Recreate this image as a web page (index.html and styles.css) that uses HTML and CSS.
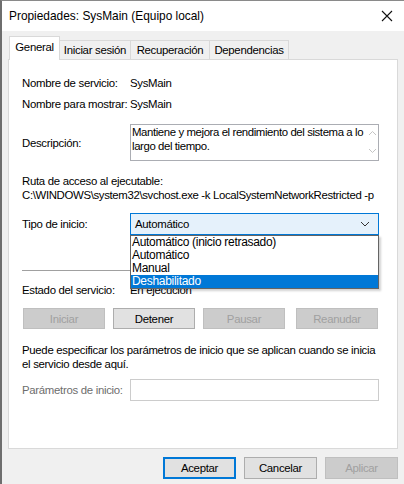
FILE: index.html
```html
<!DOCTYPE html>
<html lang="es">
<head>
<meta charset="utf-8">
<title>Propiedades: SysMain (Equipo local)</title>
<link rel="stylesheet" href="styles.css">
</head>
<body>
<div class="window">
  <div class="titlebar">
    <span class="title">Propiedades: SysMain (Equipo local)</span>
    <svg class="close" width="12" height="12" viewBox="0 0 12 12"><path d="M1 1L11 11M11 1L1 11" stroke="#111" stroke-width="1.1" fill="none"/></svg>
  </div>
  <div class="body">
    <div class="tabs">
      <div class="tab active">General</div>
      <div class="tab t2">Iniciar sesión</div>
      <div class="tab t3">Recuperación</div>
      <div class="tab t4">Dependencias</div>
    </div>
    <div class="panel">
      <div class="row r1"><span class="label">Nombre de servicio:</span><span>SysMain</span></div>
      <div class="row r2"><span class="label">Nombre para mostrar:</span><span>SysMain</span></div>
      <div class="row r3">
        <span class="label">Descripción:</span>
        <div class="textarea">
          <div class="ta-text">Mantiene y mejora el rendimiento del sistema a lo largo del tiempo.</div>
          <div class="ta-scroll">
            <svg width="9" height="6" viewBox="0 0 9 6"><path d="M1 5L4.5 1.5L8 5" stroke="#c4c4c4" fill="none"/></svg>
            <svg width="9" height="6" viewBox="0 0 9 6"><path d="M1 1L4.5 4.5L8 1" stroke="#c4c4c4" fill="none"/></svg>
          </div>
        </div>
      </div>
      <div class="path-label">Ruta de acceso al ejecutable:</div>
      <div class="path">C:\WINDOWS\system32\svchost.exe -k LocalSystemNetworkRestricted -p</div>
      <div class="row r4">
        <span class="label">Tipo de inicio:</span>
        <div class="combo">
          <span>Automático</span>
          <svg class="chev" width="10" height="6" viewBox="0 0 10 6"><path d="M1 1L5 5L9 1" stroke="#333" fill="none"/></svg>
          <div class="dropdown">
            <div class="opt">Automático (inicio retrasado)</div>
            <div class="opt">Automático</div>
            <div class="opt">Manual</div>
            <div class="opt sel">Deshabilitado</div>
          </div>
        </div>
      </div>
      <div class="sep"></div>
      <div class="row r5"><span class="label">Estado del servicio:</span><span>En ejecución</span></div>
      <div class="svc-buttons">
        <div class="btn disabled">Iniciar</div>
        <div class="btn">Detener</div>
        <div class="btn disabled">Pausar</div>
        <div class="btn disabled wide-gap">Reanudar</div>
      </div>
      <p class="note">Puede especificar los parámetros de inicio que se aplican cuando se inicia el servicio desde aquí.</p>
      <div class="row r6">
        <span class="label muted">Parámetros de inicio:</span>
        <div class="input"></div>
      </div>
    </div>
    <div class="footer">
      <div class="btn default">Aceptar</div>
      <div class="btn">Cancelar</div>
      <div class="btn disabled">Aplicar</div>
    </div>
  </div>
</div>
</body>
</html>
```
FILE: styles.css
```css
* { box-sizing: border-box; }
html, body { margin: 0; padding: 0; }
body {
  width: 404px;
  height: 484px;
  overflow: hidden;
  font-family: "Liberation Sans", Arial, sans-serif;
  font-size: 11.4px;
  letter-spacing: -0.3px;
  color: #000;
  background: #f0f0f0;
}
.window {
  height: 484px;
  border-left: 2px solid #6e6e6e;
  border-top: 1px solid #8a8a8a;
  background: #f0f0f0;
}
.titlebar {
  height: 30px;
  background: #fff;
  display: flex;
  align-items: center;
  justify-content: space-between;
  padding: 0 11px 0 7px;
}
.title { font-size: 11.9px; letter-spacing: 0; }
.body {
  padding: 0 0 0 6px;
}
.tabs {
  display: flex;
  align-items: flex-end;
  height: 28px;
  padding-left: 1px;
  white-space: nowrap;
}
.tab {
  height: 19px;
  border: 1px solid #d9d9d9;
  border-bottom: none;
  margin-left: -1px;
  display: flex;
  align-items: center;
  justify-content: center;
  background: #f0f0f0;
}
.tab.active {
  width: 51px;
  background: #fff;
  position: relative;
  z-index: 1;
  margin-bottom: -1px;
  height: 24px;
  margin-left: 0;
  padding-bottom: 3px;
}
.t2 { width: 72px; }
.t3 { width: 80px; }
.t4 { width: 80px; }
.panel {
  width: 390px;
  height: 390px;
  background: #fff;
  border: 1px solid #d9d9d9;
  padding: 16px 0 0 13px;
  display: flex;
  flex-direction: column;
}
.row {
  display: flex;
  align-items: center;
}
.label { width: 108px; flex: none; white-space: nowrap; }
.r1, .r2, .r5 { height: 14px; }
.r2 { margin-top: 7px; }
.r3 { margin-top: 13px; height: 37px; }
.textarea {
  width: 249px;
  height: 37px;
  border: 1px solid #abadb3;
  display: flex;
  justify-content: space-between;
}
.ta-text {
  width: 238px;
  padding: 0 0 0 1px;
  line-height: 14px;
  letter-spacing: -0.4px;
}
.ta-scroll {
  width: 11px;
  display: flex;
  flex-direction: column;
  justify-content: space-between;
  align-items: center;
  padding: 5px 0 6px;
}
.path-label { margin-top: 13px; height: 14px; line-height: 14px; }
.path { height: 15px; line-height: 15px; white-space: nowrap; letter-spacing: -0.35px; }
.r4 { margin-top: 10px; height: 22px; }
.combo {
  position: relative;
  width: 249px;
  height: 22px;
  border: 1px solid #0078d7;
  background: #e5f1fb;
  display: flex;
  align-items: center;
  justify-content: space-between;
  padding: 0 8px 0 4px;
}
.dropdown {
  position: absolute;
  left: -1px;
  top: 21px;
  width: 249px;
  background: #fff;
  border: 1px solid #646464;
  box-shadow: 2px 2px 2px rgba(0,0,0,0.18);
  z-index: 5;
  font-size: 12px;
}
.opt {
  height: 13px;
  line-height: 13px;
  padding-left: 1px;
}
.opt.sel { background: #0078d7; color: #fff; }
.sep {
  margin-top: 35px;
  width: 356px;
  height: 1px;
  background: #a0a0a0;
}
.r5 { margin-top: 12px; }
.svc-buttons {
  margin-top: 11px;
  display: flex;
  gap: 8px;
  padding-left: 1px;
}
.btn {
  width: 82px;
  height: 21px;
  border: 1px solid #adadad;
  background: #e1e1e1;
  display: flex;
  align-items: center;
  justify-content: center;
  white-space: nowrap;
}
.btn.disabled {
  background: #cccccc;
  border-color: #bfbfbf;
  color: #a0a0a0;
}
.wide-gap { margin-left: 3px; }
.note {
  margin: 14px 0 0;
  width: 362px;
  line-height: 14px;
}
.r6 { margin-top: 8px; height: 22px; }
.muted { color: #6d6d6d; }
.input {
  width: 249px;
  height: 22px;
  border: 1px solid #cccccc;
}
.footer {
  display: flex;
  justify-content: flex-end;
  gap: 8px;
  padding: 8px 6px 0 0;
}
.footer .btn { width: 73px; height: 22px; }
.btn.default { border: 2px solid #0078d7; }
```
